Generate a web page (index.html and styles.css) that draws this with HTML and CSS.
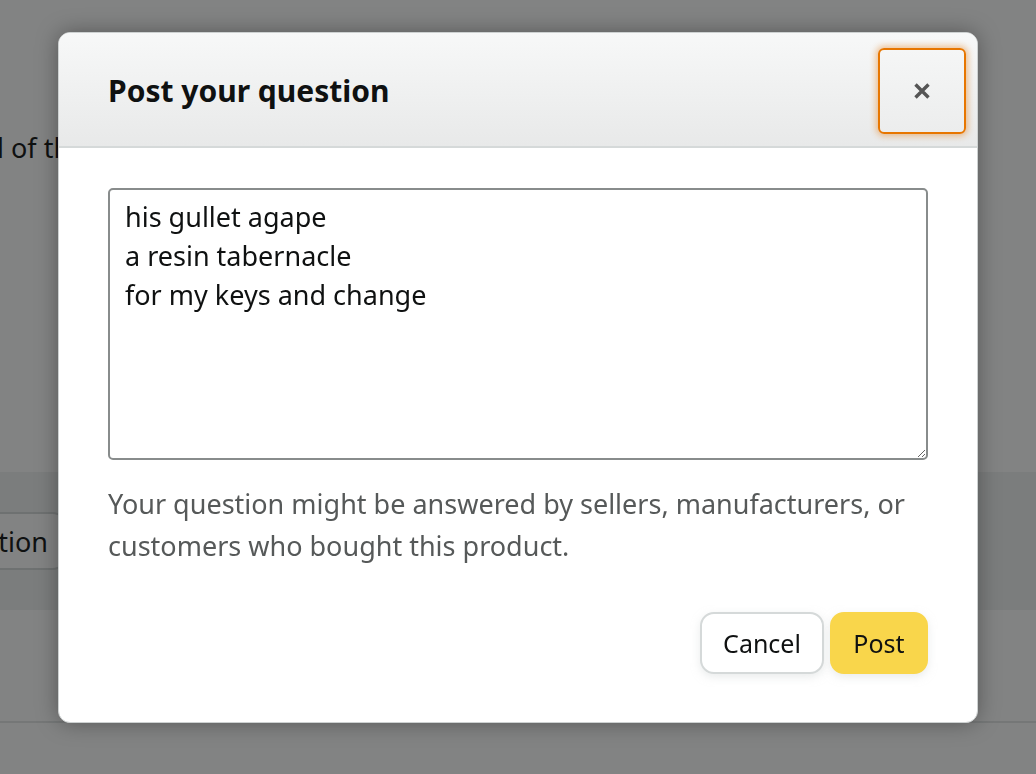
FILE: index.html
```html
<!DOCTYPE html>
<html lang="en">
<head>
<meta charset="utf-8">
<title>Post your question</title>
<link rel="stylesheet" href="styles.css">
</head>
<body>
<div class="page">
  <div class="page-top">
    <p class="page-text">l of the page details</p>
  </div>
  <div class="band">
    <button class="ask-btn" type="button">Ask a question</button>
  </div>
  <div class="page-mid"></div>
  <div class="page-foot"></div>
</div>
<div class="overlay"></div>
<div class="modal" role="dialog" aria-labelledby="modal-title">
  <header class="modal-header">
    <h2 class="modal-title" id="modal-title">Post your question</h2>
    <button class="close-btn" type="button" aria-label="Close">
      <svg width="18" height="18" viewBox="0 0 18 18" aria-hidden="true"><path d="M2.5 2.5 L15.5 15.5 M15.5 2.5 L2.5 15.5" stroke="#555" stroke-width="3.4" stroke-linecap="butt" fill="none"/></svg>
    </button>
  </header>
  <div class="modal-body">
    <textarea class="question" rows="6">his gullet agape
a resin tabernacle
for my keys and change</textarea>
    <p class="hint">Your question might be answered by sellers, manufacturers, or customers who bought this product.</p>
    <div class="actions">
      <button class="btn btn-cancel" type="button">Cancel</button>
      <button class="btn btn-post" type="button">Post</button>
    </div>
  </div>
</div>
</body>
</html>
```

FILE: styles.css
```css
html, body {
  margin: 0;
  padding: 0;
  height: 100%;
  overflow: hidden;
}
body {
  font-family: "Noto Sans", "Open Sans", sans-serif;
  background: #ffffff;
  color: #0f1111;
}
.page {
  display: flex;
  flex-direction: column;
  height: 100%;
}
.page-top {
  height: 472px;
  background: #ffffff;
  display: flex;
  flex-direction: column;
}
.page-text {
  margin: 128px 0 0 -3px;
  font-size: 27px;
  line-height: 40px;
  color: #0f1111;
  white-space: nowrap;
}
.band {
  height: 138px;
  background: #f0f2f2;
  display: flex;
  align-items: center;
}
.ask-btn {
  margin-left: -157px;
  height: 58px;
  padding: 0 18px;
  border: 2px solid #d5d9d9;
  border-radius: 16px;
  background: #ffffff;
  font-family: inherit;
  font-size: 27px;
  color: #0f1111;
  white-space: nowrap;
}
.page-mid {
  height: 111px;
  background: #ffffff;
  border-bottom: 2px solid #e3e6e6;
}
.page-foot {
  flex: 1;
  background: #ffffff;
}
.overlay {
  position: fixed;
  inset: 0;
  background: rgba(15, 17, 17, 0.52);
}
.modal {
  position: fixed;
  left: 58px;
  top: 32px;
  width: 918px;
  height: 689px;
  background: #ffffff;
  border: 1px solid #cdd1d1;
  border-radius: 12px;
  box-shadow: 0 0 22px rgba(0, 0, 0, 0.35);
  display: flex;
  flex-direction: column;
  overflow: hidden;
}
.modal-header {
  height: 113px;
  flex: none;
  display: flex;
  align-items: center;
  justify-content: space-between;
  padding: 0 11px 0 49px;
  background: linear-gradient(#f7f8f8, #e8e9e9);
  border-bottom: 2px solid #d5d9d9;
}
.modal-title {
  margin: 2px 0 0 0;
  font-size: 30px;
  font-weight: 700;
  color: #0f1111;
}
.close-btn {
  width: 88px;
  height: 86px;
  margin-top: 2px;
  border: 2px solid #e77600;
  border-radius: 6px;
  background: linear-gradient(#f5f6f6, #eceded);
  box-shadow: 0 0 6px 2px rgba(228, 121, 17, 0.45);
  display: flex;
  align-items: center;
  justify-content: center;
  padding: 0;
}
.modal-body {
  padding: 40px 49px 0 49px;
  display: flex;
  flex-direction: column;
}
.question {
  width: 820px;
  height: 272px;
  box-sizing: border-box;
  margin: 0;
  padding: 7px 15px;
  border: 2px solid #888c8c;
  border-radius: 5px;
  font-family: inherit;
  font-size: 27px;
  line-height: 39px;
  color: #0f1111;
  resize: vertical;
  outline: none;
}
.hint {
  margin: 23px 0 0 0;
  font-size: 27px;
  line-height: 42px;
  color: #565959;
}
.actions {
  display: flex;
  justify-content: flex-end;
  gap: 6px;
  margin-top: 45px;
}
.btn {
  height: 62px;
  border-radius: 14px;
  font-family: inherit;
  font-size: 25px;
  color: #0f1111;
  padding: 0;
  box-shadow: 0 3px 8px rgba(213, 217, 217, 0.5);
}
.btn-cancel {
  width: 124px;
  background: #ffffff;
  border: 2px solid #d5d9d9;
}
.btn-post {
  width: 98px;
  background: #f9d64b;
  border: 2px solid #f9d64b;
}
```
